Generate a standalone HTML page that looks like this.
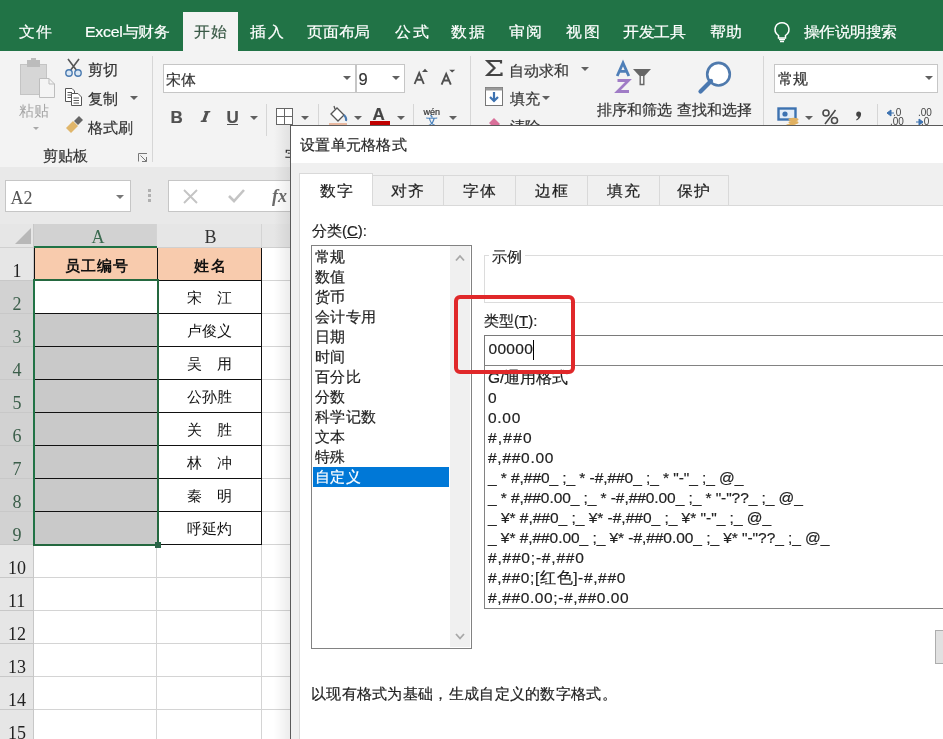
<!DOCTYPE html>
<html><head><meta charset="utf-8">
<style>
html,body{margin:0;padding:0;}
body{width:943px;height:739px;overflow:hidden;position:relative;background:#fff;font-family:"Liberation Sans",sans-serif;will-change:transform;}
div,span{box-sizing:border-box;}
.a{position:absolute;}
.t{position:absolute;white-space:nowrap;-webkit-text-stroke-width:0.2px;}
.sf{-webkit-text-stroke-width:0;}
.sf{font-family:"Liberation Serif",serif;}
svg{position:absolute;overflow:visible;}
</style></head><body>

<div class="a" style="left:0px;top:0px;width:943px;height:51px;background:#217346"></div>
<div class="a" style="left:183px;top:12px;width:55px;height:39px;background:#f3f3f3"></div>
<div class="t" style="left:18.94px;top:23.6px;font-size:15px;line-height:15px;color:#fff;letter-spacing:1.30px;transform:scaleX(1.060);transform-origin:0 0">文件</div>
<div class="t" style="left:84.94px;top:23.6px;font-size:15px;line-height:15px;color:#fff;letter-spacing:-0.23px;transform:scaleX(1.060);transform-origin:0 0">Excel与财务</div>
<div class="t" style="left:250.14px;top:23.6px;font-size:15px;line-height:15px;color:#fff;letter-spacing:1.77px;transform:scaleX(1.060);transform-origin:0 0">插入</div>
<div class="t" style="left:307.14px;top:23.6px;font-size:15px;line-height:15px;color:#fff;letter-spacing:-0.07px;transform:scaleX(1.060);transform-origin:0 0">页面布局</div>
<div class="t" style="left:394.64px;top:23.6px;font-size:15px;line-height:15px;color:#fff;letter-spacing:1.77px;transform:scaleX(1.060);transform-origin:0 0">公式</div>
<div class="t" style="left:451.34px;top:23.6px;font-size:15px;line-height:15px;color:#fff;letter-spacing:2.43px;transform:scaleX(1.060);transform-origin:0 0">数据</div>
<div class="t" style="left:509.24px;top:23.6px;font-size:15px;line-height:15px;color:#fff;letter-spacing:1.36px;transform:scaleX(1.060);transform-origin:0 0">审阅</div>
<div class="t" style="left:565.74px;top:23.6px;font-size:15px;line-height:15px;color:#fff;letter-spacing:2.11px;transform:scaleX(1.060);transform-origin:0 0">视图</div>
<div class="t" style="left:623.1400000000001px;top:23.6px;font-size:15px;line-height:15px;color:#fff;letter-spacing:-0.19px;transform:scaleX(1.060);transform-origin:0 0">开发工具</div>
<div class="t" style="left:710.44px;top:23.6px;font-size:15px;line-height:15px;color:#fff;letter-spacing:0.26px;transform:scaleX(1.060);transform-origin:0 0">帮助</div>
<div class="t" style="left:804.34px;top:23.6px;font-size:15px;line-height:15px;color:#fff;letter-spacing:-0.44px;transform:scaleX(1.060);transform-origin:0 0">操作说明搜索</div>
<div class="t" style="left:193.8px;top:23.6px;font-size:15px;line-height:15px;color:#3a5a47;letter-spacing:1.0px;transform:scaleX(1.06);transform-origin:0 0">开始</div>
<svg style="left:772.5px;top:21.5px" width="20" height="22"><path d="M5.5 13.5 C2 11 1.5 7.5 2.5 5 C4 1.5 7 0.8 9 0.8 C11 0.8 14 1.5 15.5 5 C16.5 7.5 16 11 12.5 13.5 V16 H5.5 Z" fill="none" stroke="#fff" stroke-width="1.5"/><path d="M6 17.5 H12 M7 19.5 H11" stroke="#fff" stroke-width="1.4"/></svg>
<div class="a" style="left:0px;top:51px;width:943px;height:117px;background:#f3f3f3;border-bottom:1px solid #d6d6d6"></div>
<svg style="left:18px;top:58px" width="40" height="42"><rect x="2.5" y="6.5" width="26" height="30" fill="#d6d6d6" stroke="#c4c4c4"/><rect x="9" y="2" width="13" height="7" fill="#bcbcbc"/><rect x="13" y="0" width="5" height="4" fill="#bcbcbc"/><path d="M21.5 20.5 H31 L36.5 26 V39.5 H21.5 Z" fill="#f4f4f4" stroke="#bdbdbd"/><path d="M31 20.5 V26 H36.5" fill="none" stroke="#bdbdbd"/></svg>
<div class="t" style="left:18.5px;top:102.5px;font-size:15px;line-height:15px;color:#a6a6a6;-webkit-text-stroke-width:0">粘贴</div>
<div class="a" style="left:33px;top:127px;width:0;height:0;border-left:3px solid transparent;border-right:3px solid transparent;border-top:3px solid #a8a8a8"></div>
<svg style="left:64px;top:58px" width="20" height="20"><path d="M4 1 L13 13 M15 1 L6 13" stroke="#555" stroke-width="1.6" fill="none"/><circle cx="5" cy="15" r="3.2" fill="#dbe8f5" stroke="#4a7ab0" stroke-width="1.4"/><circle cx="14" cy="15" r="3.2" fill="#dbe8f5" stroke="#4a7ab0" stroke-width="1.4"/></svg>
<div class="t" style="left:88px;top:61.8px;font-size:15px;line-height:15px;color:#333;">剪切</div>
<svg style="left:64px;top:87px" width="20" height="20"><path d="M1.5 1.5 H8 L10.5 4 V14.5 H1.5 Z" fill="#fff" stroke="#555"/><path d="M3.5 5.5 H8 M3.5 8 H8 M3.5 10.5 H8" stroke="#555"/><path d="M7.5 6.5 H14 L17.5 10 V18.5 H7.5 Z" fill="#fff" stroke="#555"/><path d="M9.5 11 H15 M9.5 13.5 H15 M9.5 16 H15" stroke="#555"/></svg>
<div class="t" style="left:88px;top:90.7px;font-size:15px;line-height:15px;color:#333;">复制</div>
<div class="a" style="left:130px;top:96px;width:0;height:0;border-left:4px solid transparent;border-right:4px solid transparent;border-top:4px solid #606060"></div>
<svg style="left:65px;top:117px" width="20" height="18"><path d="M1 11 L8 4 L13 9 L6 16 Z" fill="#e0b66b"/><path d="M9 4 L14 -1 L18 3 L13 8 Z" fill="#666"/></svg>
<div class="t" style="left:88px;top:119.5px;font-size:15px;line-height:15px;color:#333;">格式刷</div>
<div class="t" style="left:42.5px;top:148.3px;font-size:15px;line-height:15px;color:#333;">剪贴板</div>
<svg style="left:138px;top:153px" width="10" height="9"><path d="M0.5 8.5 V0.5 H9" fill="none" stroke="#777"/><path d="M2.5 2.5 L8.5 8.5 M8.5 4 V8.5 H4" fill="none" stroke="#777"/></svg>
<div class="a" style="left:152px;top:56px;width:1px;height:106px;background:#d6d6d6"></div>
<div class="a" style="left:163px;top:64px;width:193px;height:29px;background:#fff;border:1px solid #c6c6c6"></div>
<div class="t" style="left:166px;top:71.9px;font-size:15px;line-height:15px;color:#333;">宋体</div>
<div class="a" style="left:343px;top:76px;width:0;height:0;border-left:4px solid transparent;border-right:4px solid transparent;border-top:4px solid #606060"></div>
<div class="a" style="left:356px;top:64px;width:49px;height:29px;background:#fff;border:1px solid #c6c6c6"></div>
<div class="t" style="left:358.5px;top:70.5px;font-size:16.5px;line-height:16.5px;color:#333;">9</div>
<div class="a" style="left:392px;top:76px;width:0;height:0;border-left:4px solid transparent;border-right:4px solid transparent;border-top:4px solid #606060"></div>
<svg style="left:410px;top:64px" width="50" height="24"><path d="M4.6 20 L9.2 8.9 L13.8 20 M6.4 15.8 H12" fill="none" stroke="#4f4f4f" stroke-width="1.9"/><path d="M12 8 L15 4.8 L18 8 Z" fill="#4f4f4f"/><path d="M31.6 20.6 L36.2 9.8 L40.8 20.6 M33.4 16.5 H39" fill="none" stroke="#4f4f4f" stroke-width="1.9"/><path d="M39.2 5.8 H45.2 L42.2 8.4 Z" fill="#4f4f4f"/></svg>
<div class="t" style="left:170.5px;top:108.5px;font-size:17px;line-height:17px;color:#505050;"><b>B</b></div>
<svg style="left:200px;top:110px" width="12" height="14"><path d="M4.5 1 H10.5 L10 2.6 H8.6 L5.6 10.4 H7 L6.5 12 H0.5 L1 10.4 H2.4 L5.4 2.6 H4 Z" fill="#505050"/></svg>
<div class="t" style="left:226.5px;top:108.5px;font-size:17px;line-height:17px;color:#505050;"><b>U</b></div>
<div class="a" style="left:227px;top:123.5px;width:11px;height:1.5px;background:#505050"></div>
<div class="a" style="left:250px;top:116px;width:0;height:0;border-left:4px solid transparent;border-right:4px solid transparent;border-top:4px solid #606060"></div>
<div class="a" style="left:266px;top:104px;width:1px;height:32px;background:#d6d6d6"></div>
<svg style="left:276px;top:108px" width="18" height="18"><rect x="0.5" y="0.5" width="16" height="16" fill="#fff" stroke="#666"/><path d="M8.5 0.5 V16.5 M0.5 8.5 H16.5" stroke="#666"/></svg>
<div class="a" style="left:301px;top:116px;width:0;height:0;border-left:4px solid transparent;border-right:4px solid transparent;border-top:4px solid #606060"></div>
<div class="a" style="left:318px;top:104px;width:1px;height:26px;background:#d6d6d6"></div>
<svg style="left:329px;top:105px" width="20" height="20"><path d="M2 9 L8 3 L15 10 L9 16 Z" fill="#fff" stroke="#555" stroke-width="1.3"/><path d="M6 4 L5 1" stroke="#555" stroke-width="1.3"/><path d="M15 10 Q18 13 17 16" fill="none" stroke="#4a7ab0" stroke-width="2"/><rect x="0" y="18" width="18" height="3" fill="#e8b8a0"/></svg>
<div class="a" style="left:354px;top:116px;width:0;height:0;border-left:4px solid transparent;border-right:4px solid transparent;border-top:4px solid #606060"></div>
<div class="t" style="left:372.5px;top:106px;font-size:17px;line-height:17px;color:#444;font-weight:bold">A</div>
<div class="a" style="left:370px;top:121px;width:20px;height:4px;background:#c00000"></div>
<div class="a" style="left:397px;top:116px;width:0;height:0;border-left:4px solid transparent;border-right:4px solid transparent;border-top:4px solid #606060"></div>
<div class="a" style="left:413px;top:104px;width:1px;height:26px;background:#d6d6d6"></div>
<div class="t" style="left:423.5px;top:107.5px;font-size:9px;line-height:9px;color:#333;">wén</div>
<div class="t" style="left:426px;top:114.5px;font-size:12px;line-height:12px;color:#3a78b8;">文</div>
<div class="a" style="left:449px;top:116px;width:0;height:0;border-left:4px solid transparent;border-right:4px solid transparent;border-top:4px solid #606060"></div>
<div class="t" style="left:285px;top:148.3px;font-size:15px;line-height:15px;color:#333;">字体</div>
<div class="a" style="left:470px;top:56px;width:1px;height:106px;background:#d6d6d6"></div>
<svg style="left:486px;top:60px" width="17" height="17"><path d="M15 3.5 V1 H1.5 L8.5 8 L1.5 15 H15.5 V12.5" fill="none" stroke="#444" stroke-width="2.2" stroke-linejoin="miter"/></svg>
<div class="t" style="left:509px;top:62.5px;font-size:15px;line-height:15px;color:#333;">自动求和</div>
<div class="a" style="left:581px;top:67px;width:0;height:0;border-left:4px solid transparent;border-right:4px solid transparent;border-top:4px solid #606060"></div>
<svg style="left:485px;top:87px" width="19" height="20"><rect x="0.5" y="0.5" width="17" height="18" fill="#fff" stroke="#777"/><rect x="0.5" y="0.5" width="17" height="3" fill="#999"/><path d="M9 5 V14 M5 10 L9 14 L13 10" fill="none" stroke="#3d72b0" stroke-width="2.2"/></svg>
<div class="t" style="left:510px;top:91.2px;font-size:15px;line-height:15px;color:#333;">填充</div>
<div class="a" style="left:542px;top:96px;width:0;height:0;border-left:4px solid transparent;border-right:4px solid transparent;border-top:4px solid #606060"></div>
<svg style="left:488px;top:116px" width="14" height="12"><path d="M1 7 L6 2 L12 8 L7 13 Z" fill="#d9709a"/></svg>
<div class="t" style="left:510px;top:118.5px;font-size:15px;line-height:15px;color:#333;">清除</div>
<svg style="left:616px;top:62px" width="15" height="32"><path d="M1.2 14 L7 1 L12.8 14 M3.4 9.3 H10.6" fill="none" stroke="#4f7fb8" stroke-width="2.8"/><path d="M1.5 18.5 H12.5 L1.5 29.5 H13" fill="none" stroke="#a07cc6" stroke-width="2.8"/></svg>
<svg style="left:633px;top:69px" width="19" height="17"><path d="M0 0 H18 L11.5 7 H6.5 Z" fill="#666"/><path d="M7.2 7 V15.5 H10.8 V7" fill="#f3f3f3" stroke="#666" stroke-width="1.4"/></svg>
<div class="t" style="left:596.7px;top:102.4px;font-size:15px;line-height:15px;color:#333;">排序和筛选</div>
<svg style="left:696px;top:60px" width="40" height="36"><circle cx="22.5" cy="14.2" r="11.3" fill="#fff" stroke="#4f7aad" stroke-width="2.6"/><path d="M15 21 L4.5 31.5" stroke="#4a78b0" stroke-width="4.2" stroke-linecap="round"/></svg>
<div class="t" style="left:676.8px;top:102.4px;font-size:15px;line-height:15px;color:#333;">查找和选择</div>
<div class="a" style="left:763px;top:56px;width:1px;height:106px;background:#d6d6d6"></div>
<div class="a" style="left:774px;top:64px;width:164px;height:29px;background:#fff;border:1px solid #c6c6c6"></div>
<div class="t" style="left:778px;top:71.3px;font-size:15px;line-height:15px;color:#333;">常规</div>
<div class="a" style="left:925px;top:76px;width:0;height:0;border-left:4px solid transparent;border-right:4px solid transparent;border-top:4px solid #606060"></div>
<svg style="left:777px;top:107px" width="26" height="20"><rect x="1.5" y="1.5" width="17" height="11" fill="#e4edf7" stroke="#3d72b0" stroke-width="2.4"/><circle cx="8" cy="7" r="2.6" fill="#3d72b0"/><ellipse cx="16.5" cy="12.5" rx="5" ry="1.8" fill="#e0b060"/><ellipse cx="16.5" cy="15.5" rx="5" ry="1.8" fill="#e0b060"/><ellipse cx="14" cy="18.5" rx="5" ry="1.8" fill="#e0b060"/></svg>
<div class="a" style="left:805px;top:116px;width:0;height:0;border-left:4px solid transparent;border-right:4px solid transparent;border-top:4px solid #606060"></div>
<svg style="left:822px;top:109px" width="17" height="16"><circle cx="4" cy="4" r="3" fill="none" stroke="#4a4a4a" stroke-width="1.6"/><circle cx="12.5" cy="11.5" r="3" fill="none" stroke="#4a4a4a" stroke-width="1.6"/><path d="M13.5 1 L3 15" stroke="#4a4a4a" stroke-width="1.6"/></svg>
<svg style="left:855px;top:111px" width="8" height="10"><path d="M3.5 0.5 C5.5 0.5 6.5 2 6 4 C5.5 6.5 4 8.5 1.5 9.5 L1.2 8.5 C2.5 7.8 3.2 6.8 3.3 5.8 C1.8 5.6 1.2 4.6 1.2 3.2 C1.2 1.5 2.2 0.5 3.5 0.5 Z" fill="#444"/></svg>
<div class="a" style="left:877px;top:104px;width:1px;height:26px;background:#d6d6d6"></div>
<svg style="left:887px;top:108px" width="50" height="20"><text x="6" y="8" font-family="Liberation Sans" font-size="10" fill="#444">.0</text><text x="3" y="17" font-family="Liberation Sans" font-size="10" fill="#444">.00</text><path d="M0 5 L4 2 V8 Z M3 5 H7" fill="#3d72b0" stroke="#3d72b0"/><text x="31" y="8" font-family="Liberation Sans" font-size="10" fill="#444">.00</text><text x="34" y="17" font-family="Liberation Sans" font-size="10" fill="#444">.0</text><path d="M29 14 H33 M36 14 L32 11 V17 Z" fill="#3d72b0" stroke="#3d72b0"/></svg>
<div class="a" style="left:0px;top:167px;width:943px;height:57px;background:#e9e9e9"></div>
<div class="a" style="left:5px;top:180px;width:126px;height:32px;background:#fff;border:1px solid #c6c6c6"></div>
<div class="t sf" style="left:10.5px;top:188.5px;font-size:18px;line-height:18px;color:#555;">A2</div>
<div class="a" style="left:168px;top:180px;width:131px;height:32px;background:#fff;border:1px solid #c6c6c6"></div>
<div class="a" style="left:116px;top:195px;width:0;height:0;border-left:4px solid transparent;border-right:4px solid transparent;border-top:4px solid #777"></div>
<div class="a" style="left:148px;top:189px;width:3px;height:3px;background:#b0b0b0"></div>
<div class="a" style="left:148px;top:194px;width:3px;height:3px;background:#b0b0b0"></div>
<div class="a" style="left:148px;top:199px;width:3px;height:3px;background:#b0b0b0"></div>
<svg style="left:183px;top:189px" width="110" height="16"><path d="M1 1 L14 14 M14 1 L1 14" stroke="#c4c4c4" stroke-width="1.9"/><path d="M46 7 L51 12 L61 1" fill="none" stroke="#c4c4c4" stroke-width="2.6"/></svg>
<div class="t sf" style="left:272px;top:187px;font-size:18px;line-height:18px;color:#6a6a6a;"><b><i>fx</i></b></div>
<div class="a" style="left:0px;top:224px;width:943px;height:24px;background:#e6e6e6;border-bottom:1px solid #d0d0d0"></div>
<div class="a" style="left:34px;top:224px;width:123px;height:22px;background:#d2d2d2"></div>
<div class="t sf" style="left:91.5px;top:227.5px;font-size:18px;line-height:18px;color:#3b6b50;">A</div>
<div class="t sf" style="left:204.5px;top:228px;font-size:18px;line-height:18px;color:#333;">B</div>
<svg style="left:15px;top:227px" width="18" height="18"><path d="M16 1 V17 H0 Z" fill="#b8b8b8"/></svg>
<div class="a" style="left:0px;top:248px;width:34px;height:33px;background:#e6e6e6;border-bottom:1px solid #c8c8c8"></div>
<div class="t sf" style="left:12.5px;top:261.5px;font-size:18px;line-height:18px;color:#222;">1</div>
<div class="a" style="left:34px;top:280px;width:909px;height:1px;background:#d4d4d4"></div>
<div class="a" style="left:0px;top:281px;width:34px;height:33px;background:#d2d2d2;border-bottom:1px solid #c8c8c8"></div>
<div class="t sf" style="left:12.5px;top:294.5px;font-size:18px;line-height:18px;color:#3b5e4a;">2</div>
<div class="a" style="left:34px;top:313px;width:909px;height:1px;background:#d4d4d4"></div>
<div class="a" style="left:0px;top:314px;width:34px;height:33px;background:#d2d2d2;border-bottom:1px solid #c8c8c8"></div>
<div class="t sf" style="left:12.5px;top:327.5px;font-size:18px;line-height:18px;color:#3b5e4a;">3</div>
<div class="a" style="left:34px;top:346px;width:909px;height:1px;background:#d4d4d4"></div>
<div class="a" style="left:0px;top:347px;width:34px;height:33px;background:#d2d2d2;border-bottom:1px solid #c8c8c8"></div>
<div class="t sf" style="left:12.5px;top:360.5px;font-size:18px;line-height:18px;color:#3b5e4a;">4</div>
<div class="a" style="left:34px;top:379px;width:909px;height:1px;background:#d4d4d4"></div>
<div class="a" style="left:0px;top:380px;width:34px;height:33px;background:#d2d2d2;border-bottom:1px solid #c8c8c8"></div>
<div class="t sf" style="left:12.5px;top:393.5px;font-size:18px;line-height:18px;color:#3b5e4a;">5</div>
<div class="a" style="left:34px;top:412px;width:909px;height:1px;background:#d4d4d4"></div>
<div class="a" style="left:0px;top:413px;width:34px;height:33px;background:#d2d2d2;border-bottom:1px solid #c8c8c8"></div>
<div class="t sf" style="left:12.5px;top:426.5px;font-size:18px;line-height:18px;color:#3b5e4a;">6</div>
<div class="a" style="left:34px;top:445px;width:909px;height:1px;background:#d4d4d4"></div>
<div class="a" style="left:0px;top:446px;width:34px;height:33px;background:#d2d2d2;border-bottom:1px solid #c8c8c8"></div>
<div class="t sf" style="left:12.5px;top:459.5px;font-size:18px;line-height:18px;color:#3b5e4a;">7</div>
<div class="a" style="left:34px;top:478px;width:909px;height:1px;background:#d4d4d4"></div>
<div class="a" style="left:0px;top:479px;width:34px;height:33px;background:#d2d2d2;border-bottom:1px solid #c8c8c8"></div>
<div class="t sf" style="left:12.5px;top:492.5px;font-size:18px;line-height:18px;color:#3b5e4a;">8</div>
<div class="a" style="left:34px;top:511px;width:909px;height:1px;background:#d4d4d4"></div>
<div class="a" style="left:0px;top:512px;width:34px;height:33px;background:#d2d2d2;border-bottom:1px solid #c8c8c8"></div>
<div class="t sf" style="left:12.5px;top:525.5px;font-size:18px;line-height:18px;color:#3b5e4a;">9</div>
<div class="a" style="left:34px;top:544px;width:909px;height:1px;background:#d4d4d4"></div>
<div class="a" style="left:0px;top:545px;width:34px;height:33px;background:#e6e6e6;border-bottom:1px solid #c8c8c8"></div>
<div class="t sf" style="left:8.0px;top:558.5px;font-size:18px;line-height:18px;color:#222;">10</div>
<div class="a" style="left:34px;top:577px;width:909px;height:1px;background:#d4d4d4"></div>
<div class="a" style="left:0px;top:578px;width:34px;height:33px;background:#e6e6e6;border-bottom:1px solid #c8c8c8"></div>
<div class="t sf" style="left:8.0px;top:591.5px;font-size:18px;line-height:18px;color:#222;">11</div>
<div class="a" style="left:34px;top:610px;width:909px;height:1px;background:#d4d4d4"></div>
<div class="a" style="left:0px;top:611px;width:34px;height:33px;background:#e6e6e6;border-bottom:1px solid #c8c8c8"></div>
<div class="t sf" style="left:8.0px;top:624.5px;font-size:18px;line-height:18px;color:#222;">12</div>
<div class="a" style="left:34px;top:643px;width:909px;height:1px;background:#d4d4d4"></div>
<div class="a" style="left:0px;top:644px;width:34px;height:33px;background:#e6e6e6;border-bottom:1px solid #c8c8c8"></div>
<div class="t sf" style="left:8.0px;top:657.5px;font-size:18px;line-height:18px;color:#222;">13</div>
<div class="a" style="left:34px;top:676px;width:909px;height:1px;background:#d4d4d4"></div>
<div class="a" style="left:0px;top:677px;width:34px;height:33px;background:#e6e6e6;border-bottom:1px solid #c8c8c8"></div>
<div class="t sf" style="left:8.0px;top:690.5px;font-size:18px;line-height:18px;color:#222;">14</div>
<div class="a" style="left:34px;top:709px;width:909px;height:1px;background:#d4d4d4"></div>
<div class="a" style="left:0px;top:710px;width:34px;height:33px;background:#e6e6e6;border-bottom:1px solid #c8c8c8"></div>
<div class="t sf" style="left:8.0px;top:723.5px;font-size:18px;line-height:18px;color:#222;">15</div>
<div class="a" style="left:34px;top:742px;width:909px;height:1px;background:#d4d4d4"></div>
<div class="a" style="left:156px;top:224px;width:1px;height:515px;background:#d4d4d4"></div>
<div class="a" style="left:261px;top:224px;width:1px;height:515px;background:#d4d4d4"></div>
<div class="a" style="left:399px;top:224px;width:1px;height:515px;background:#d4d4d4"></div>
<div class="a" style="left:33px;top:224px;width:1px;height:515px;background:#c8c8c8"></div>
<div class="a" style="left:34px;top:248px;width:123px;height:32px;background:#f8cbad"></div>
<div class="a" style="left:157px;top:248px;width:105px;height:32px;background:#f8cbad"></div>
<div class="a" style="left:34px;top:314px;width:123px;height:33px;background:#c9c9c9"></div>
<div class="a" style="left:34px;top:347px;width:123px;height:33px;background:#c9c9c9"></div>
<div class="a" style="left:34px;top:380px;width:123px;height:33px;background:#c9c9c9"></div>
<div class="a" style="left:34px;top:413px;width:123px;height:33px;background:#c9c9c9"></div>
<div class="a" style="left:34px;top:446px;width:123px;height:33px;background:#c9c9c9"></div>
<div class="a" style="left:34px;top:479px;width:123px;height:33px;background:#c9c9c9"></div>
<div class="a" style="left:34px;top:512px;width:123px;height:33px;background:#c9c9c9"></div>
<div class="a" style="left:34px;top:281px;width:123px;height:32px;background:#fff"></div>
<div class="a" style="left:157px;top:281px;width:105px;height:33px;background:#fff"></div>
<div class="a" style="left:157px;top:314px;width:105px;height:33px;background:#fff"></div>
<div class="a" style="left:157px;top:347px;width:105px;height:33px;background:#fff"></div>
<div class="a" style="left:157px;top:380px;width:105px;height:33px;background:#fff"></div>
<div class="a" style="left:157px;top:413px;width:105px;height:33px;background:#fff"></div>
<div class="a" style="left:157px;top:446px;width:105px;height:33px;background:#fff"></div>
<div class="a" style="left:157px;top:479px;width:105px;height:33px;background:#fff"></div>
<div class="a" style="left:157px;top:512px;width:105px;height:33px;background:#fff"></div>
<div class="a" style="left:34px;top:280px;width:228px;height:1px;background:#111"></div>
<div class="a" style="left:34px;top:313px;width:228px;height:1px;background:#111"></div>
<div class="a" style="left:34px;top:346px;width:228px;height:1px;background:#111"></div>
<div class="a" style="left:34px;top:379px;width:228px;height:1px;background:#111"></div>
<div class="a" style="left:34px;top:412px;width:228px;height:1px;background:#111"></div>
<div class="a" style="left:34px;top:445px;width:228px;height:1px;background:#111"></div>
<div class="a" style="left:34px;top:478px;width:228px;height:1px;background:#111"></div>
<div class="a" style="left:34px;top:511px;width:228px;height:1px;background:#111"></div>
<div class="a" style="left:34px;top:544px;width:228px;height:1px;background:#111"></div>
<div class="a" style="left:34px;top:248px;width:1px;height:297px;background:#111"></div>
<div class="a" style="left:157px;top:248px;width:1px;height:297px;background:#111"></div>
<div class="a" style="left:261px;top:248px;width:1px;height:297px;background:#111"></div>
<div class="t" style="left:65px;top:257.5px;font-size:15px;line-height:15px;color:#111;font-weight:bold;letter-spacing:0.9px;-webkit-text-stroke-width:0">员工编号</div>
<div class="t" style="left:194px;top:257.5px;font-size:15px;line-height:15px;color:#111;font-weight:bold;letter-spacing:2px;-webkit-text-stroke-width:0">姓名</div>
<div class="t" style="left:187px;top:290px;font-size:15px;line-height:15px;color:#111;-webkit-text-stroke-width:0">宋　江</div>
<div class="t" style="left:187px;top:323px;font-size:15px;line-height:15px;color:#111;-webkit-text-stroke-width:0">卢俊义</div>
<div class="t" style="left:187px;top:356px;font-size:15px;line-height:15px;color:#111;-webkit-text-stroke-width:0">吴　用</div>
<div class="t" style="left:187px;top:389px;font-size:15px;line-height:15px;color:#111;-webkit-text-stroke-width:0">公孙胜</div>
<div class="t" style="left:187px;top:422px;font-size:15px;line-height:15px;color:#111;-webkit-text-stroke-width:0">关　胜</div>
<div class="t" style="left:187px;top:455px;font-size:15px;line-height:15px;color:#111;-webkit-text-stroke-width:0">林　冲</div>
<div class="t" style="left:187px;top:488px;font-size:15px;line-height:15px;color:#111;-webkit-text-stroke-width:0">秦　明</div>
<div class="t" style="left:187px;top:521px;font-size:15px;line-height:15px;color:#111;-webkit-text-stroke-width:0">呼延灼</div>
<div class="a" style="left:33px;top:279px;width:126px;height:267px;border:2px solid #24683f"></div>
<div class="a" style="left:34px;top:246px;width:123px;height:2px;background:#217346"></div>
<div class="a" style="left:33px;top:280px;width:2px;height:264px;background:#217346"></div>
<div class="a" style="left:154.5px;top:541.5px;width:6px;height:6px;background:#2a6447"></div>
<!-- dialog -->
<div class="a" style="left:274px;top:125px;width:17px;height:614px;background:linear-gradient(to right,rgba(0,0,0,0),rgba(0,0,0,0.08))"></div>
<div class="a" style="left:290px;top:125px;width:653px;height:614px;background:#f0f0f0;border-left:1px solid #5a5a5a;border-top:1px solid #5a5a5a"></div>
<div class="a" style="left:291px;top:126px;width:652px;height:37px;background:#fff"></div>
<div class="t" style="left:300px;top:137px;font-size:15px;line-height:15px;color:#2a2a2a;letter-spacing:0.25px">设置单元格格式</div>
<div class="a" style="left:372px;top:175px;width:72px;height:31px;background:#f0f0f0;border:1px solid #d9d9d9"></div>
<div class="a" style="left:443px;top:175px;width:73px;height:31px;background:#f0f0f0;border:1px solid #d9d9d9"></div>
<div class="a" style="left:515px;top:175px;width:73px;height:31px;background:#f0f0f0;border:1px solid #d9d9d9"></div>
<div class="a" style="left:587px;top:175px;width:73px;height:31px;background:#f0f0f0;border:1px solid #d9d9d9"></div>
<div class="a" style="left:659px;top:175px;width:70px;height:31px;background:#f0f0f0;border:1px solid #d9d9d9"></div>
<div class="a" style="left:299px;top:205px;width:644px;height:534px;background:#fff;border-left:1px solid #d9d9d9;border-top:1px solid #d9d9d9"></div>
<div class="a" style="left:299px;top:173px;width:74px;height:33px;background:#fff;border:1px solid #d9d9d9;border-bottom:none"></div>
<div class="t" style="left:319.8px;top:183.4px;font-size:15px;line-height:15px;color:#222;letter-spacing:0.6px;transform:scaleX(1.06);transform-origin:0 0">数字</div>
<div class="t" style="left:391.3px;top:183.4px;font-size:15px;line-height:15px;color:#222;letter-spacing:0.6px;transform:scaleX(1.06);transform-origin:0 0">对齐</div>
<div class="t" style="left:462.8px;top:183.4px;font-size:15px;line-height:15px;color:#222;letter-spacing:0.6px;transform:scaleX(1.06);transform-origin:0 0">字体</div>
<div class="t" style="left:534.8px;top:183.4px;font-size:15px;line-height:15px;color:#222;letter-spacing:0.6px;transform:scaleX(1.06);transform-origin:0 0">边框</div>
<div class="t" style="left:606.8px;top:183.4px;font-size:15px;line-height:15px;color:#222;letter-spacing:0.6px;transform:scaleX(1.06);transform-origin:0 0">填充</div>
<div class="t" style="left:677.3px;top:183.4px;font-size:15px;line-height:15px;color:#222;letter-spacing:0.6px;transform:scaleX(1.06);transform-origin:0 0">保护</div>
<div class="t" style="left:312px;top:223.4px;font-size:15px;line-height:15px;color:#222;">分类(<span style="text-decoration:underline">C</span>):</div>
<div class="a" style="left:311px;top:245px;width:161px;height:404px;background:#fff;border:1px solid #828282"></div>
<div class="a" style="left:450px;top:246px;width:20px;height:401px;background:#f0f0f0"></div>
<div class="t" style="left:315px;top:249px;font-size:15px;line-height:15px;color:#222;letter-spacing:0.4px">常规</div>
<div class="t" style="left:315px;top:269px;font-size:15px;line-height:15px;color:#222;letter-spacing:0.4px">数值</div>
<div class="t" style="left:315px;top:289px;font-size:15px;line-height:15px;color:#222;letter-spacing:0.4px">货币</div>
<div class="t" style="left:315px;top:309px;font-size:15px;line-height:15px;color:#222;letter-spacing:0.4px">会计专用</div>
<div class="t" style="left:315px;top:329px;font-size:15px;line-height:15px;color:#222;letter-spacing:0.4px">日期</div>
<div class="t" style="left:315px;top:349px;font-size:15px;line-height:15px;color:#222;letter-spacing:0.4px">时间</div>
<div class="t" style="left:315px;top:369px;font-size:15px;line-height:15px;color:#222;letter-spacing:0.4px">百分比</div>
<div class="t" style="left:315px;top:389px;font-size:15px;line-height:15px;color:#222;letter-spacing:0.4px">分数</div>
<div class="t" style="left:315px;top:409px;font-size:15px;line-height:15px;color:#222;letter-spacing:0.4px">科学记数</div>
<div class="t" style="left:315px;top:429px;font-size:15px;line-height:15px;color:#222;letter-spacing:0.4px">文本</div>
<div class="t" style="left:315px;top:449px;font-size:15px;line-height:15px;color:#222;letter-spacing:0.4px">特殊</div>
<div class="a" style="left:313px;top:467px;width:136px;height:20px;background:#0078d7"></div>
<div class="t" style="left:315px;top:469px;font-size:15px;line-height:15px;color:#fff;letter-spacing:0.4px">自定义</div>
<svg style="left:454.5px;top:254px" width="11" height="8"><path d="M1 6.5 L5 2 L9 6.5" fill="none" stroke="#a8a8a8" stroke-width="1.8"/></svg>
<svg style="left:454.5px;top:633px" width="11" height="8"><path d="M1 1 L5 5.5 L9 1" fill="none" stroke="#a8a8a8" stroke-width="1.8"/></svg>
<div class="a" style="left:484px;top:255px;width:470px;height:48px;border:1px solid #dcdcdc"></div>
<div class="a" style="left:489px;top:248px;width:36px;height:14px;background:#fff"></div>
<div class="t" style="left:492px;top:248.5px;font-size:15px;line-height:15px;color:#222;">示例</div>
<div class="t" style="left:484px;top:313.2px;font-size:15px;line-height:15px;color:#222;">类型(<span style="text-decoration:underline">T</span>):</div>
<div class="a" style="left:484px;top:335px;width:470px;height:30px;background:#fff;border:1px solid #7a7a7a;border-bottom:none"></div>
<div class="t" style="left:488.5px;top:340.5px;font-size:15.5px;line-height:15.5px;color:#222;letter-spacing:0.3px">00000</div>
<div class="a" style="left:533px;top:340px;width:1px;height:20px;background:#000"></div>
<div class="a" style="left:484px;top:365px;width:470px;height:244px;background:#fff;border:1px solid #828282"></div>
<div class="t" style="left:488px;top:369.5px;font-size:15.5px;line-height:15.5px;color:#222;letter-spacing:-0.09px;white-space:pre">G/通用格式</div>
<div class="t" style="left:488px;top:389.5px;font-size:15.5px;line-height:15.5px;color:#222;letter-spacing:-0.23px;white-space:pre">0</div>
<div class="t" style="left:488px;top:409.5px;font-size:15.5px;line-height:15.5px;color:#222;letter-spacing:0.70px;white-space:pre">0.00</div>
<div class="t" style="left:488px;top:429.5px;font-size:15.5px;line-height:15.5px;color:#222;letter-spacing:1.20px;white-space:pre">#,##0</div>
<div class="t" style="left:488px;top:449.5px;font-size:15.5px;line-height:15.5px;color:#222;letter-spacing:0.73px;white-space:pre">#,##0.00</div>
<div class="t" style="left:488px;top:469.5px;font-size:15.5px;line-height:15.5px;color:#222;letter-spacing:-0.06px;white-space:pre">_ * #,##0_ ;_ * -#,##0_ ;_ * "-"_ ;_ @_</div>
<div class="t" style="left:488px;top:489.5px;font-size:15.5px;line-height:15.5px;color:#222;letter-spacing:-0.07px;white-space:pre">_ * #,##0.00_ ;_ * -#,##0.00_ ;_ * "-"??_ ;_ @_</div>
<div class="t" style="left:488px;top:509.5px;font-size:15.5px;line-height:15.5px;color:#222;letter-spacing:-0.01px;white-space:pre">_ ¥* #,##0_ ;_ ¥* -#,##0_ ;_ ¥* "-"_ ;_ @_</div>
<div class="t" style="left:488px;top:529.5px;font-size:15.5px;line-height:15.5px;color:#222;letter-spacing:-0.05px;white-space:pre">_ ¥* #,##0.00_ ;_ ¥* -#,##0.00_ ;_ ¥* "-"??_ ;_ @_</div>
<div class="t" style="left:488px;top:549.5px;font-size:15.5px;line-height:15.5px;color:#222;letter-spacing:0.80px;white-space:pre">#,##0;-#,##0</div>
<div class="t" style="left:488px;top:569.5px;font-size:15.5px;line-height:15.5px;color:#222;letter-spacing:0.64px;white-space:pre">#,##0;[红色]-#,##0</div>
<div class="t" style="left:488px;top:589.5px;font-size:15.5px;line-height:15.5px;color:#222;letter-spacing:0.62px;white-space:pre">#,##0.00;-#,##0.00</div>
<div class="a" style="left:454px;top:294.5px;width:121px;height:79.5px;border:4px solid #e0282a;border-radius:6px"></div>
<div class="t" style="left:311px;top:685.5px;font-size:15px;line-height:15px;color:#222;letter-spacing:0.3px">以现有格式为基础，生成自定义的数字格式。</div>
<div class="a" style="left:935px;top:630px;width:20px;height:34px;background:#e1e1e1;border:1px solid #adadad"></div>
</body></html>
